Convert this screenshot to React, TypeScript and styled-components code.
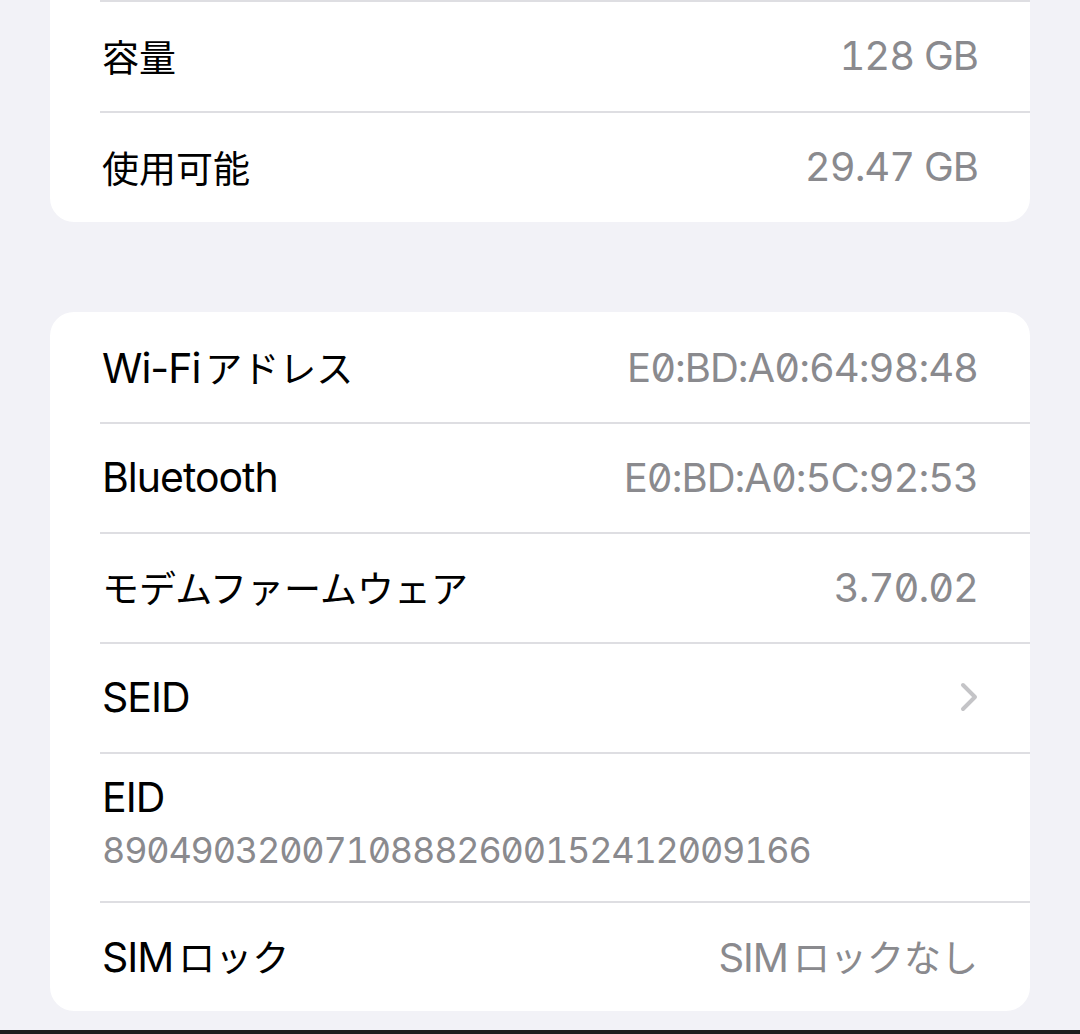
import styled, { createGlobalStyle } from "styled-components";

const GlobalStyle = createGlobalStyle`
  html, body {
    margin: 0;
    padding: 0;
    background: #f2f2f7;
  }
  body {
    font-family: Inter, "Noto Sans CJK JP", sans-serif;
    -webkit-font-smoothing: antialiased;
  }
`;

const Screen = styled.div`
  width: 1080px;
  height: 1034px;
  overflow: hidden;
  display: flex;
  flex-direction: column;
  background: #f2f2f7;
`;

const Card = styled.section<{ $cutTop?: boolean }>`
  margin: 0 50px;
  background: #fff;
  border-radius: ${(p) => (p.$cutTop ? "0 0 24px 24px" : "24px")};
  overflow: hidden;
`;

const Gap = styled.div<{ $h: number }>`
  flex: none;
  height: ${(p) => p.$h}px;
`;

const Row = styled.div<{ $divider?: boolean; $h?: number }>`
  position: relative;
  height: ${(p) => p.$h ?? 110}px;
  padding: 0 52px;
  display: flex;
  align-items: center;
  justify-content: space-between;
  box-sizing: border-box;

  ${(p) =>
    p.$divider &&
    `
    &::before {
      content: "";
      position: absolute;
      top: 0;
      left: 50px;
      right: 0;
      height: 2px;
      background: #dedee2;
    }
  `}
`;

const StackRow = styled(Row)`
  flex-direction: column;
  align-items: flex-start;
  justify-content: flex-start;
  padding-top: 20px;
`;

const Label = styled.span`
  font-size: 41px;
  letter-spacing: -1px;
  color: #000;
  white-space: nowrap;
`;

const Jp = styled.span<{ $lead?: boolean }>`
  font-family: "Noto Sans CJK JP", sans-serif;
  font-size: 37px;
  letter-spacing: 0;
  margin-left: ${(p) => (p.$lead ? "5px" : "0")};
`;

const Value = styled.span`
  font-size: 40px;
  letter-spacing: -1px;
  color: #8a8a8e;
  white-space: nowrap;
  font-feature-settings: "zero" 1, "tnum" 1;
`;

const EidValue = styled.span`
  margin-top: 6px;
  font-size: 36px;
  color: #8a8a8e;
  white-space: nowrap;
  font-feature-settings: "zero" 1, "tnum" 1;
  letter-spacing: -1.2px;
`;

const Chevron = styled.svg`
  width: 20px;
  height: 32px;
  margin-right: -1px;
`;

const BottomBar = styled.div`
  margin-top: auto;
  height: 4px;
  background: #1c1c1e;
`;

export default function App() {
  return (
    <>
      <GlobalStyle />
      <Screen>
        <Card $cutTop>
          <Row $divider $h={111}>
            <Label>
              <Jp>容量</Jp>
            </Label>
            <Value>128 GB</Value>
          </Row>
          <Row $divider $h={111}>
            <Label>
              <Jp>使用可能</Jp>
            </Label>
            <Value>29.47 GB</Value>
          </Row>
        </Card>

        <Gap $h={90} />

        <Card>
          <Row>
            <Label>
              Wi-Fi<Jp $lead>アドレス</Jp>
            </Label>
            <Value>E0:BD:A0:64:98:48</Value>
          </Row>
          <Row $divider>
            <Label>Bluetooth</Label>
            <Value>E0:BD:A0:5C:92:53</Value>
          </Row>
          <Row $divider>
            <Label>
              <Jp>モデムファームウェア</Jp>
            </Label>
            <Value>3.70.02</Value>
          </Row>
          <Row $divider>
            <Label>SEID</Label>
            <Chevron viewBox="0 0 20 32" fill="none">
              <path
                d="M4 4l12 12-12 12"
                stroke="#c4c4c7"
                strokeWidth="4"
                strokeLinecap="round"
                strokeLinejoin="round"
              />
            </Chevron>
          </Row>
          <StackRow $divider $h={149}>
            <Label>EID</Label>
            <EidValue>89049032007108882600152412009166</EidValue>
          </StackRow>
          <Row $divider>
            <Label>
              SIM<Jp $lead>ロック</Jp>
            </Label>
            <Value>
              SIM<Jp $lead>ロックなし</Jp>
            </Value>
          </Row>
        </Card>

        <BottomBar />
      </Screen>
    </>
  );
}
